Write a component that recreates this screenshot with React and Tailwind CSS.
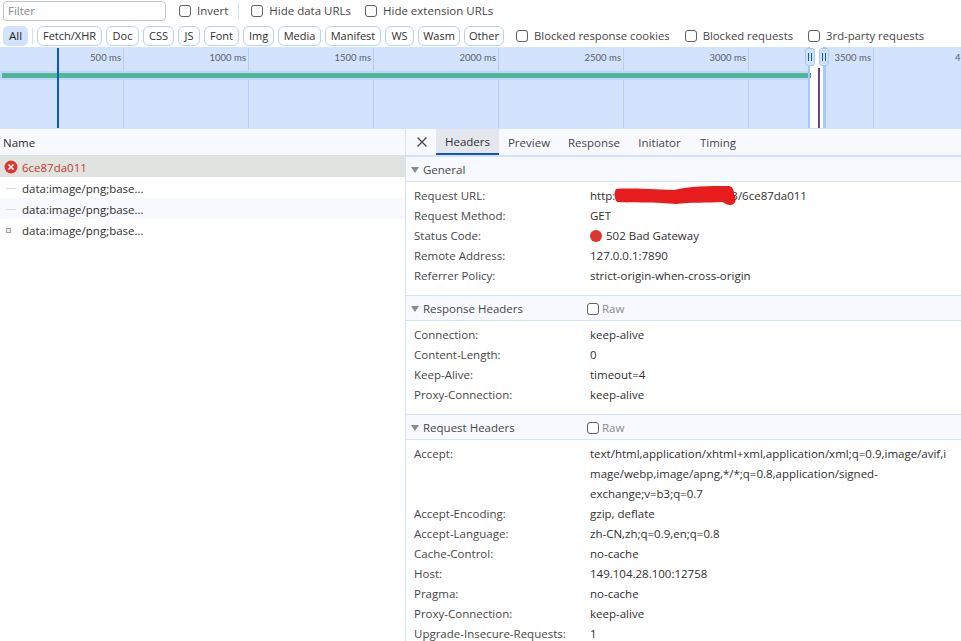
const CHIPS = [
  ['Fetch/XHR', 'w-[65px]'],
  ['Doc', 'w-[33px]'],
  ['CSS', 'w-[31px]'],
  ['JS', 'w-[22px]'],
  ['Font', 'w-[35px]'],
  ['Img', 'w-[31px]'],
  ['Media', 'w-[43px]'],
  ['Manifest', 'w-[56px]'],
  ['WS', 'w-[29px]'],
  ['Wasm', 'w-[42px]'],
  ['Other', 'w-[40px]'],
];
const TICKS = [
  { x: 123, label: '500 ms' },
  { x: 248, label: '1000 ms' },
  { x: 373, label: '1500 ms' },
  { x: 498, label: '2000 ms' },
  { x: 623, label: '2500 ms' },
  { x: 748, label: '3000 ms' },
  { x: 873, label: '3500 ms' },
];
const GENERAL = [
  ['Request Method:', 'GET'],
];
const GENERAL_AFTER = [
  ['Remote Address:', '127.0.0.1:7890'],
  ['Referrer Policy:', 'strict-origin-when-cross-origin'],
];
const RESPONSE = [
  ['Connection:', 'keep-alive'],
  ['Content-Length:', '0'],
  ['Keep-Alive:', 'timeout=4'],
  ['Proxy-Connection:', 'keep-alive'],
];
const REQUEST_AFTER = [
  ['Accept-Encoding:', 'gzip, deflate'],
  ['Accept-Language:', 'zh-CN,zh;q=0.9,en;q=0.8'],
  ['Cache-Control:', 'no-cache'],
  ['Host:', '149.104.28.100:12758'],
  ['Pragma:', 'no-cache'],
  ['Proxy-Connection:', 'keep-alive'],
  ['Upgrade-Insecure-Requests:', '1'],
];

function Check({ label, className = '' }) {
  return (
    <label className={`flex items-center gap-[6px] whitespace-nowrap text-[#474747] ${className}`}>
      <span className="h-[12px] w-[12px] shrink-0 rounded-[3px] border border-[#5f6368] bg-white" />
      {label}
    </label>
  );
}

function Row({ name, children }) {
  return (
    <div className="flex h-[20px] items-center pl-[8px]">
      <div className="w-[176px] shrink-0 text-[#474747]">{name}</div>
      <div className="text-[#303030]">{children}</div>
    </div>
  );
}

function SectionHead({ title, raw }) {
  return (
    <div className="flex h-[26px] items-center border-y border-[#d3e3fd] bg-[#f8f9fe] pt-px text-[#474747]">
      <span className="ml-[5px] mr-[4px] h-0 w-0 border-x-[4px] border-t-[6px] border-x-transparent border-t-[#8a8a8a]" />
      <span className="w-[164px] shrink-0">{title}</span>
      <span className={raw ? 'flex items-center gap-[3px] text-[#8a8a8a]' : 'hidden'}>
        <span className="h-[12px] w-[12px] rounded-[3px] border border-[#5f6368] bg-white" />
        Raw
      </span>
    </div>
  );
}

function FileIcon({ kind }) {
  if (kind === 'dash') {
    return <span className="ml-[6px] mr-[6px] block h-px w-[10px] bg-[#dcdcdc]" />;
  }
  return <span className="ml-[6px] mr-[11px] block h-[5px] w-[5px] border border-[#a0a0a0] bg-[#eeeeee]" />;
}

function Handle({ className }) {
  return (
    <div className={`absolute top-px flex h-[18px] w-[10px] items-center justify-center rounded-[3px] border border-[#a8c7fa] bg-[#d3e3fd] ${className}`}>
      <span className="h-[8px] w-[4px] border-x border-[#0b57d0]" />
    </div>
  );
}

function Overview() {
  return (
    <div className="relative h-[81px] overflow-hidden bg-[#d3e3fd]">
      {TICKS.map(t => (
        <div key={t.x}>
          <div className="absolute top-px bottom-0 w-px bg-[#b5cdf7]" style={{ left: t.x }} />
          <span className="absolute top-[3px] font-['Lato',sans-serif] text-[9.5px] leading-[16px] whitespace-nowrap text-[#5c6068]" style={{ right: 961 - t.x + 2 }}>
            {t.label}
          </span>
        </div>
      ))}
      <span className="absolute top-[3px] left-[955px] font-['Lato',sans-serif] text-[9.5px] leading-[16px] text-[#5c6068]">4</span>
      <div className="absolute top-[24px] left-0 h-[9px] w-[810px] bg-[#c0d6fa]" />
      <div className="absolute top-[26px] left-[2px] h-[5px] w-[806px] bg-[#4fb695]" />
      <div className="absolute top-px bottom-0 left-[57px] w-[2px] bg-[#0b57d0]" />
      <div className="absolute top-0 bottom-0 left-[808px] w-[18px] border-r-[3px] border-l-[2px] border-[#a8c7fa] bg-white" />
      <div className="absolute top-[26px] left-[810px] h-[5px] w-px bg-[#4d87e8]" />
      <div className="absolute top-[21px] bottom-0 left-[818px] w-px bg-[#0b57d0]" />
      <div className="absolute top-[21px] bottom-0 left-[819px] w-px bg-[#d93025]" />
      <Handle className="left-[805px]" />
      <Handle className="left-[819px]" />
    </div>
  );
}

export default function App() {
  return (
    <div className="h-[641px] w-[961px] overflow-hidden bg-white font-['Open_Sans','Noto_Sans',sans-serif] text-[11.5px] leading-[16px] text-[#303030]">
      {/* filter row */}
      <div className="flex h-[22px] items-center">
        <div className="ml-[3px] flex h-[20px] w-[163px] items-center rounded-[4px] border border-[#c4c7c5] pl-[4px] text-[#8a8a8a]">Filter</div>
        <Check label="Invert" className="ml-[13px]" />
        <div className="ml-[10px] h-[16px] w-px bg-[#d3e3fd]" />
        <Check label="Hide data URLs" className="ml-[12px]" />
        <Check label="Hide extension URLs" className="ml-[14px]" />
      </div>

      {/* type chips */}
      <div className="flex h-[25px] items-center pt-[3px]">
        <div className="ml-[3px] flex h-[20px] w-[25px] items-center justify-center rounded-[5px] bg-[#d3e3fd] text-[#1f1f1f]">All</div>
        <div className="ml-[4px] h-[16px] w-px bg-[#d3e3fd]" />
        <div className="ml-[4px] flex gap-[4px] text-[11px]">
          {CHIPS.map(([c, w]) => (
            <div key={c} className={`flex h-[20px] items-center justify-center rounded-[6px] border border-[#bcd0f5] bg-white text-[#303030] ${w}`}>{c}</div>
          ))}
        </div>
        <div className="flex text-[11.3px]">
          <Check label="Blocked response cookies" className="ml-[12px]" />
          <Check label="Blocked requests" className="ml-[15px]" />
          <Check label="3rd-party requests" className="ml-[15px]" />
        </div>
      </div>

      <Overview />

      <div className="flex h-[513px]">
        {/* request list */}
        <div className="w-[406px] shrink-0 border-r border-[#d3e3fd]">
          <div className="flex h-[28px] items-center border-y border-[#d3e3fd] bg-[#f8f9fe] pt-[2px] pl-[3px] text-[#303030]">Name</div>
          <div className="flex h-[21px] items-center bg-[#e1e3e1] pt-[2px] text-[#c5392c]">
            <svg width="14" height="14" viewBox="0 0 14 14" className="ml-[4px] mr-[4px] -mt-[2px]">
              <circle cx="7" cy="7" r="6.5" fill="#dc362e" />
              <path d="M4.5 4.5l5 5M9.5 4.5l-5 5" stroke="#fff" strokeWidth="1.6" />
            </svg>
            6ce87da011
          </div>
          <div className="flex h-[21px] items-center pt-[2px]"><FileIcon kind="dash" />data:image/png;base...</div>
          <div className="flex h-[21px] items-center bg-[#f8f9fe] pt-[2px]"><FileIcon kind="dash" />data:image/png;base...</div>
          <div className="flex h-[21px] items-center pt-[2px]"><FileIcon />data:image/png;base...</div>
        </div>

        {/* detail pane */}
        <div className="min-w-0 flex-1">
          <div className="flex h-[28px] items-stretch border-y border-[#d3e3fd] bg-[#f8f9fe] text-[#474747]">
            <div className="flex w-[30px] items-center justify-center pl-[2px]">
              <svg width="12" height="12" viewBox="0 0 12 12">
                <path d="M1.5 1.5l9 9M10.5 1.5l-9 9" stroke="#474747" strokeWidth="1.3" fill="none" />
              </svg>
            </div>
            <div className="flex w-[63px] items-center justify-center border-b-2 border-[#0b57d0] bg-[#e4e7ee] pt-[2px] text-[#303030]">Headers</div>
            <div className="flex w-[60px] items-center justify-center pt-px">Preview</div>
            <div className="flex w-[70px] items-center justify-center pt-px">Response</div>
            <div className="flex w-[61px] items-center justify-center pt-px">Initiator</div>
            <div className="flex w-[56px] items-center justify-center pt-px">Timing</div>
          </div>

          <SectionHead title="General" />
          <div className="pt-[4px] pb-[9px]">
            <Row name="Request URL:">
              <span className="relative inline-block whitespace-nowrap">
                <span className="pr-[116px]">http:</span>3/6ce87da011
                <svg width="124" height="20" viewBox="0 0 124 20" className="absolute -top-[2px] left-[24px]">
                  <path d="M2 3 C12 2 35 3 60 4 C75 0 95 0 115 0 C119 1 120 4 120 8 C123 13 122 19 116 19 C112 19 110 16 108 16 C95 17 75 16 62 18 C45 16 15 17 3 16 C0 12 0 7 2 3 Z" fill="#e81c1c" />
                </svg>
              </span>
            </Row>
            {GENERAL.map(([k, v]) => <Row key={k} name={k}>{v}</Row>)}
            <Row name="Status Code:">
              <span className="flex items-center gap-[4px]">
                <span className="h-[12px] w-[12px] rounded-full bg-[#dc362e]" />
                502 Bad Gateway
              </span>
            </Row>
            {GENERAL_AFTER.map(([k, v]) => <Row key={k} name={k}>{v}</Row>)}
          </div>

          <SectionHead title="Response Headers" raw />
          <div className="pt-[4px] pb-[9px]">
            {RESPONSE.map(([k, v]) => <Row key={k} name={k}>{v}</Row>)}
          </div>

          <SectionHead title="Request Headers" raw />
          <div className="pt-[4px]">
            <div className="flex pl-[8px]">
              <div className="w-[176px] shrink-0 pt-[2px] text-[#474747]">Accept:</div>
              <div className="leading-[20px] whitespace-nowrap">
                text/html,application/xhtml+xml,application/xml;q=0.9,image/avif,i<br />
                mage/webp,image/apng,*/*;q=0.8,application/signed-<br />
                exchange;v=b3;q=0.7
              </div>
            </div>
            {REQUEST_AFTER.map(([k, v]) => <Row key={k} name={k}>{v}</Row>)}
          </div>
        </div>
      </div>
    </div>
  );
}
